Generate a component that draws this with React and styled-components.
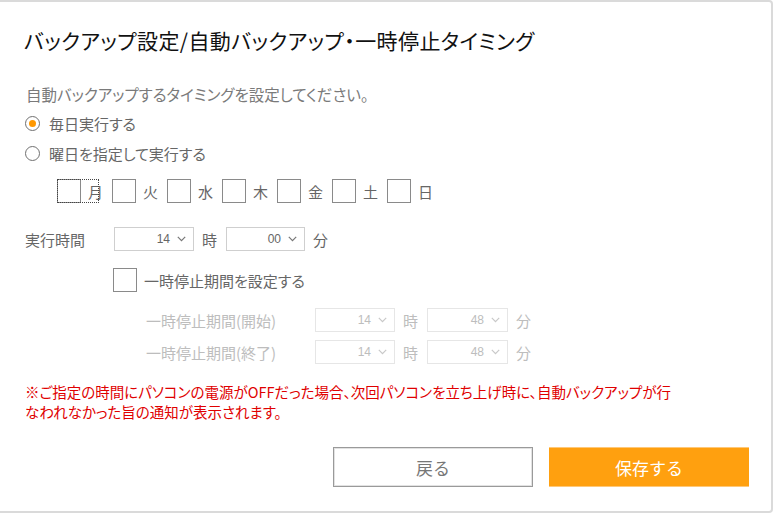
import React from "react";
import styled, { createGlobalStyle } from "styled-components";

const Global = createGlobalStyle`
  html, body { margin: 0; padding: 0; background: #fff; }
  body {
    font-family: "Noto Sans CJK JP", "Noto Sans", sans-serif;
    font-feature-settings: "palt";
  }
`;

const Dialog = styled.div`
  box-sizing: border-box;
  width: 773px;
  height: 513px;
  background: #fff;
  border: 2px solid #dadada;
  border-left: none;
  border-radius: 0 4px 4px 0;
  padding: 20px 22px 0 24px;
  display: flex;
  flex-direction: column;
`;

const Title = styled.h1`
  margin: 0;
  font-size: 21px;
  font-weight: 400;
  color: #111;
  line-height: 36px;
  letter-spacing: 0.4px;
`;

const Lead = styled.p`
  margin: 25px 0 0 2px;
  font-size: 15.5px;
  line-height: 22px;
  color: #7a7a7a;
`;

const RadioRow = styled.label`
  display: flex;
  align-items: center;
  gap: 9px;
  height: 30px;
  margin-left: 1px;
  font-size: 15px;
  color: #666;
`;

const RadioCircle = styled.span`
  box-sizing: border-box;
  width: 15px;
  height: 15px;
  border-radius: 50%;
  border: 1px solid #707070;
  display: flex;
  align-items: center;
  justify-content: center;
  &::after {
    content: "";
    width: 7px;
    height: 7px;
    border-radius: 50%;
    background: ${(p) => (p.$checked ? "#ff9800" : "transparent")};
  }
`;

const Days = styled.div`
  display: flex;
  gap: 13px;
  margin: 11px 0 0 33px;
`;

const Day = styled.label`
  display: flex;
  align-items: center;
  gap: 7px;
  height: 24px;
  font-size: 15px;
  color: #666;
  outline: ${(p) => (p.$focused ? "1px dotted #444" : "none")};
  outline-offset: -1px;
  width: 42px;
`;

const Box = styled.span`
  box-sizing: border-box;
  flex: none;
  width: 24px;
  height: 24px;
  border: 1.5px solid #8a8a8a;
  background: #fff;
`;

const TimeRow = styled.div`
  display: flex;
  align-items: center;
  margin-top: 24px;
  height: 24px;
`;

const FieldLabel = styled.span`
  width: 89px;
  margin-left: 1px;
  font-size: 15px;
  color: #666;
`;

const Unit = styled.span`
  font-size: 15px;
  color: ${(p) => (p.$disabled ? "#bdbdbd" : "#666")};
  margin: 0 9px 0 8px;
`;

const SelectBox = styled.div`
  box-sizing: border-box;
  width: ${(p) => p.$w || 80}px;
  height: 24px;
  border: 1px solid ${(p) => (p.$disabled ? "#e6e6e6" : "#cfcfcf")};
  display: flex;
  align-items: center;
  justify-content: flex-end;
  gap: 7px;
  padding-right: 7px;
  font-family: "Liberation Sans", sans-serif;
  font-size: 12px;
  color: ${(p) => (p.$disabled ? "#bdbdbd" : "#666")};
`;

const PauseRow = styled.label`
  display: flex;
  align-items: center;
  gap: 7px;
  margin: 17px 0 0 89px;
  font-size: 15px;
  color: #666;
`;

const PeriodRows = styled.div`
  display: flex;
  flex-direction: column;
  gap: 8px;
  margin: 16px 0 0 122px;
`;

const PeriodRow = styled.div`
  display: flex;
  align-items: center;
  height: 24px;
`;

const PeriodLabel = styled.span`
  width: 169px;
  font-size: 15px;
  color: #bdbdbd;
`;

const Note = styled.p`
  margin: 18px 0 0 1px;
  font-size: 14.5px;
  line-height: 20px;
  color: #e00000;
`;

const Buttons = styled.div`
  display: flex;
  justify-content: flex-end;
  gap: 16px;
  margin-top: 25px;
`;

const Button = styled.button`
  box-sizing: border-box;
  width: 200px;
  height: 40px;
  font-family: inherit;
  font-size: 17px;
  cursor: pointer;
  ${(p) =>
    p.$primary
      ? `
    background: #ffa00f;
    color: #fff;
    border: none;
    border-top: 1px solid #ffc878;
    border-bottom: 1px solid #ffc878;
  `
      : `
    background: #fff;
    color: #777;
    border: 1px solid #9a9a9a;
    box-shadow: inset 0 0 0 1px #e2e2e2;
  `}
`;

const Chevron = ({ color }) => (
  <svg width="9" height="6" viewBox="0 0 9 6">
    <path d="M0.8 0.8 L4.5 4.6 L8.2 0.8" fill="none" stroke={color} strokeWidth="1.2" />
  </svg>
);

const Select = ({ value, disabled, w }) => (
  <SelectBox $disabled={disabled} $w={w}>
    <span>{value}</span>
    <Chevron color={disabled ? "#c8c8c8" : "#777"} />
  </SelectBox>
);

const days = ["月", "火", "水", "木", "金", "土", "日"];

export default function App() {
  return (
    <>
      <Global />
      <Dialog>
        <Title>バックアップ設定/自動バックアップ・一時停止タイミング</Title>
        <Lead>自動バックアップするタイミングを設定してください。</Lead>
        <RadioRow style={{ marginTop: 3 }}>
          <RadioCircle $checked />
          毎日実行する
        </RadioRow>
        <RadioRow>
          <RadioCircle />
          曜日を指定して実行する
        </RadioRow>
        <Days>
          {days.map((d, i) => (
            <Day key={d} $focused={i === 0}>
              <Box />
              {d}
            </Day>
          ))}
        </Days>
        <TimeRow>
          <FieldLabel>実行時間</FieldLabel>
          <Select value="14" />
          <Unit>時</Unit>
          <Select value="00" w={79} />
          <Unit>分</Unit>
        </TimeRow>
        <PauseRow>
          <Box />
          一時停止期間を設定する
        </PauseRow>
        <PeriodRows>
          <PeriodRow>
            <PeriodLabel>一時停止期間(開始)</PeriodLabel>
            <Select value="14" disabled />
            <Unit $disabled>時</Unit>
            <Select value="48" disabled w={81} />
            <Unit $disabled>分</Unit>
          </PeriodRow>
          <PeriodRow>
            <PeriodLabel>一時停止期間(終了)</PeriodLabel>
            <Select value="14" disabled />
            <Unit $disabled>時</Unit>
            <Select value="48" disabled w={81} />
            <Unit $disabled>分</Unit>
          </PeriodRow>
        </PeriodRows>
        <Note>
          ※ご指定の時間にパソコンの電源がOFFだった場合、次回パソコンを立ち上げ時に、自動バックアップが行
          <br />
          なわれなかった旨の通知が表示されます。
        </Note>
        <Buttons>
          <Button>戻る</Button>
          <Button $primary>保存する</Button>
        </Buttons>
      </Dialog>
    </>
  );
}
